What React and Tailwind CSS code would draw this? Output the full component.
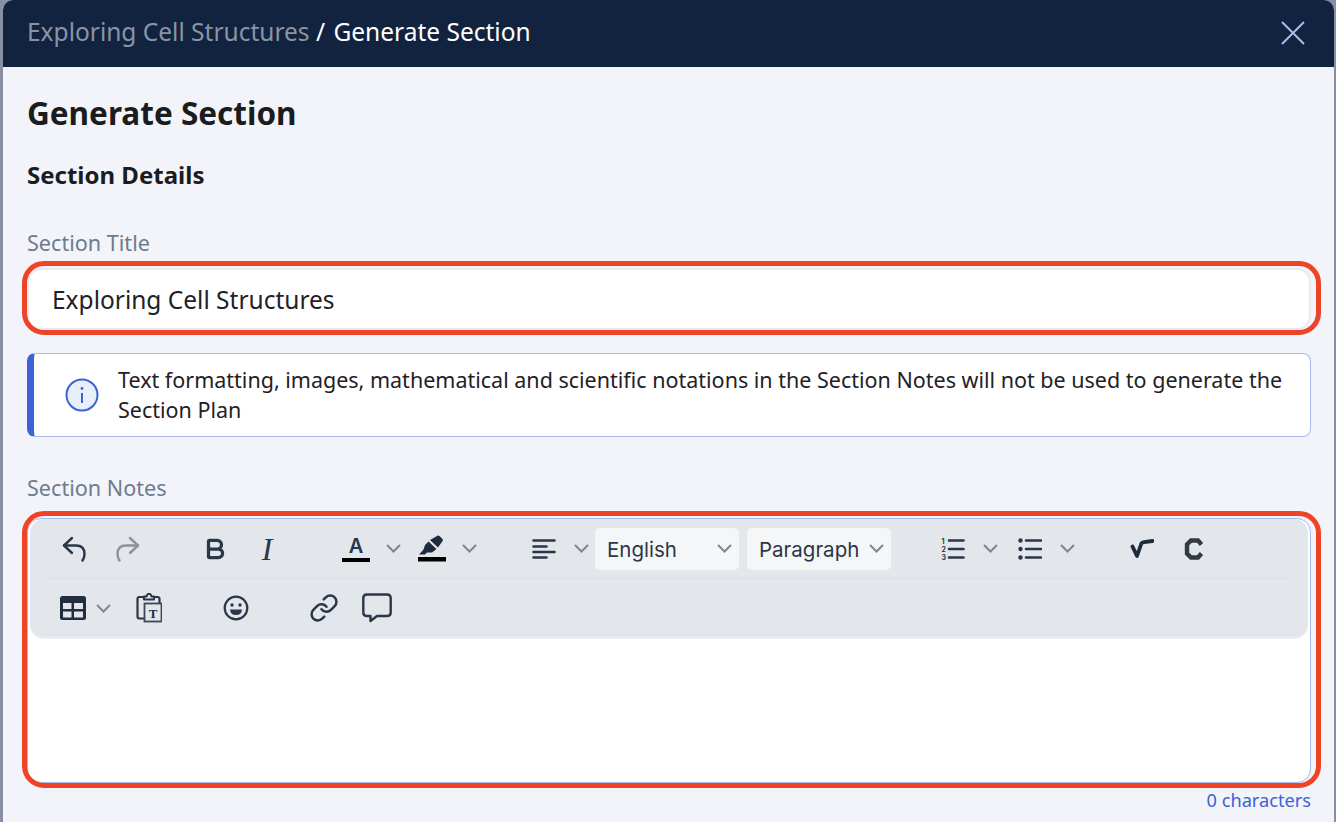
import { Bold, Link } from 'lucide-react'

function Chevron({ className = '' }) {
  return (
    <svg viewBox="0 0 15 9" className={`w-[15px] h-[9px] shrink-0 ${className}`} fill="none" stroke="#80868f" strokeWidth="2">
      <path d="M1 1L7.5 7.5L14 1" />
    </svg>
  )
}

function FakeSelect({ label, className = '' }) {
  return (
    <div className={`w-[144px] h-[42px] shrink-0 rounded-[5px] bg-[#f5f6f7] flex items-center justify-between pl-[12px] pr-[7px] text-[20.5px] text-[#2d3748] ${className}`}>
      <span className="pt-[3px]">{label}</span>
      <Chevron />
    </div>
  )
}

function RedRing({ className = '' }) {
  return <div className={`absolute rounded-[22px] border-[5px] border-[#ee4327] pointer-events-none ${className}`} />
}

function Undo({ className = '', color = '#2b3648' }) {
  return (
    <svg viewBox="0 0 24 26" className={`w-[24px] h-[26px] shrink-0 ${className}`} fill="none" stroke={color} strokeWidth="2.4" strokeLinecap="round" strokeLinejoin="round">
      <path d="M10 2L2 9.5L10 17" />
      <path d="M2 9.5H14Q22.5 9.5 22.5 18Q22.5 21.5 20.5 24.5" />
    </svg>
  )
}

function Highlighter() {
  return (
    <svg viewBox="0 0 28 28" className="w-[28px] h-[28px]">
      <path d="M12 5L19.5 0.8Q20.5 0.2 21.5 1L24.5 4Q25.3 5 24.6 6L20 12.5Z" fill="#1f2a3c" />
      <path d="M10.5 6.5L18.5 14L14 17.5H9L7 19.5H1L5.5 14.5L7 10Z" fill="#1f2a3c" />
      <rect x="0" y="22" width="28" height="4.5" fill="#000" />
    </svg>
  )
}

function AlignLeft() {
  return (
    <svg viewBox="0 0 24 24" className="w-[24px] h-[24px]" stroke="#2b3648" strokeWidth="2.6" strokeLinecap="round">
      <path d="M1.5 3.5H22.5M1.5 9.5H14.5M1.5 15H22.5M1.5 20.5H14.5" />
    </svg>
  )
}

function Numbered() {
  return (
    <svg viewBox="0 0 24 24" className="w-[24px] h-[24px]">
      <path d="M8 3.5H22.5M8 12H22.5M8 20.5H22.5" stroke="#2b3648" strokeWidth="2.6" strokeLinecap="round" />
      <text x="0.5" y="6.5" fontSize="7" fontWeight="700" fontFamily="Inter" fill="#2b3648">1</text>
      <text x="0.5" y="14.5" fontSize="7" fontWeight="700" fontFamily="Inter" fill="#2b3648">2</text>
      <text x="0.5" y="23" fontSize="7" fontWeight="700" fontFamily="Inter" fill="#2b3648">3</text>
    </svg>
  )
}

function Bullets() {
  return (
    <svg viewBox="0 0 24 24" className="w-[24px] h-[24px]">
      <path d="M8 3.5H23M8 12H23M8 20.5H23" stroke="#2b3648" strokeWidth="2.6" strokeLinecap="round" />
      <circle cx="2.5" cy="3.5" r="2.2" fill="#2b3648" />
      <circle cx="2.5" cy="12" r="2.2" fill="#2b3648" />
      <circle cx="2.5" cy="20.5" r="2.2" fill="#2b3648" />
    </svg>
  )
}

function Sqrt() {
  return (
    <svg viewBox="0 0 24 24" className="w-[24px] h-[24px]" fill="none" stroke="#1f2a3c" strokeLinecap="round" strokeLinejoin="round">
      <path d="M2.5 9.5L7 19L11 7.5Q11.5 5.5 14 5.2L22.5 4" strokeWidth="3.8" />
    </svg>
  )
}

function ChemC() {
  return (
    <svg viewBox="0 0 20 24" className="w-[20px] h-[24px]" fill="none" stroke="#333a42" strokeWidth="4.4">
      <path d="M17.5 7.5L14 3.5H7L3 7.5V16.5L7 20.5H14L17.5 16.5" />
    </svg>
  )
}

function TableIcon() {
  return (
    <svg viewBox="0 0 26 26" className="w-[26px] h-[26px]">
      <rect x="0" y="1" width="26" height="24" rx="2.5" fill="#222d3f" />
      <rect x="3" y="8" width="8.5" height="6" fill="#e3e6eb" />
      <rect x="14" y="8" width="9" height="6" fill="#e3e6eb" />
      <rect x="3" y="16.5" width="8.5" height="6" fill="#e3e6eb" />
      <rect x="14" y="16.5" width="9" height="6" fill="#e3e6eb" />
    </svg>
  )
}

function ClipboardT() {
  return (
    <svg viewBox="0 0 26 30" className="w-[26px] h-[30px]">
      <path d="M8 4H3.5Q1.5 4 1.5 6V23.5Q1.5 25.5 3.5 25.5H8M18 4H21.5Q23.5 4 23.5 6V10" fill="none" stroke="#2b3648" strokeWidth="2.2" />
      <path d="M8 6.5V3.5H10.5Q11 0.8 13 0.8Q15 0.8 15.5 3.5H18V6.5Z" fill="none" stroke="#2b3648" strokeWidth="2" strokeLinejoin="round" />
      <rect x="8.5" y="10.5" width="17" height="18" fill="#e3e6eb" stroke="#3d4757" strokeWidth="1.8" />
      <text x="17" y="25" textAnchor="middle" fontSize="13" fontWeight="700" fontFamily="Liberation Serif" fill="#1f2a3c">T</text>
    </svg>
  )
}

function Laugh() {
  return (
    <svg viewBox="0 0 26 26" className="w-[26px] h-[26px] shrink-0" fill="none">
      <circle cx="13" cy="13" r="11.3" stroke="#2b3648" strokeWidth="2.2" />
      <circle cx="9" cy="10" r="1.7" fill="#2b3648" />
      <circle cx="17" cy="10" r="1.7" fill="#2b3648" />
      <path d="M7 14.5H19Q18.5 20 13 20Q7.5 20 7 14.5Z" fill="#2b3648" />
    </svg>
  )
}

function Comment() {
  return (
    <svg viewBox="0 0 30 30" className="w-[30px] h-[30px]" fill="none" stroke="#2b3648" strokeWidth="2.4" strokeLinejoin="round">
      <path d="M5 1.5H25Q28.7 1.5 28.7 5V19.5Q28.7 23 25 23H15L8.5 28V23H5Q1.3 23 1.3 19.5V5Q1.3 1.5 5 1.5Z" />
    </svg>
  )
}

export default function App() {
  return (
    <div className="h-screen overflow-hidden bg-[#868fa3] pl-[3px] pr-[2px] font-['Noto_Sans',sans-serif]">
      <div className="h-full rounded-t-[10px] overflow-hidden bg-[#f3f4f9]">
        {/* Header */}
        <header className="h-[67px] bg-[#12233f] flex items-center justify-between pb-[2px] pl-[24px] pr-[29px] text-[24.5px]">
          <div>
            <span className="text-[#8a94a6]">Exploring Cell Structures</span>
            <span className="text-white"> / <span className="ml-[2px]">Generate Section</span></span>
          </div>
          <svg viewBox="0 0 24 24" className="w-[24px] h-[24px]" fill="none" stroke="#a9bdec" strokeWidth="2">
            <path d="M1 1L23 23M23 1L1 23" />
          </svg>
        </header>

        <div className="pl-[24px] pr-[23px]">
          <h1 className="pt-[26px] text-[31.5px] leading-[40px] font-bold text-[#1a1c20]">Generate Section</h1>
          <h2 className="mt-[27px] text-[24px] leading-[30px] font-bold text-[#1a1c20]">Section Details</h2>

          <label className="block mt-[39px] text-[21.6px] leading-[28px] text-[#6e7b8e]">Section Title</label>
          <div className="relative mt-[11px] h-[62px] rounded-[14px] bg-white border-2 border-[#e9eaf0] pl-[23px] pt-[3px] flex items-center text-[24.5px] text-[#1f2126]">
            Exploring Cell Structures
            <RedRing className="-left-[7px] -right-[12px] -top-[9px] -bottom-[7px]" />
          </div>

          {/* Info banner */}
          <div className="mt-[23px] h-[84px] rounded-[8px] bg-white border border-[#a9b9ea] border-l-[7px] border-l-[#3b62d6] flex items-center">
            <svg viewBox="0 0 34 34" className="w-[34px] h-[34px] ml-[31px] shrink-0" fill="none">
              <circle cx="17" cy="17" r="15.5" fill="#e9eefb" stroke="#3b62d6" strokeWidth="2" />
              <path d="M17 15V25" stroke="#3b62d6" strokeWidth="2" />
              <circle cx="17" cy="10.5" r="1.4" fill="#3b62d6" />
            </svg>
            <p className="ml-[19px] text-[21.5px] leading-[30px] text-[#1f2126] whitespace-nowrap">
              Text formatting, images, mathematical and scientific notations in the Section Notes will not be used to generate the<br />Section Plan
            </p>
          </div>

          <label className="block mt-[37px] text-[21.6px] leading-[28px] text-[#6e7b8e]">Section Notes</label>

          {/* Editor */}
          <div className="relative mt-[16px] h-[265px] rounded-[14px] bg-white border border-[#a9b9ea] font-['Inter',sans-serif]">
            <div className="mx-[2px] h-[120px] rounded-[14px] bg-[#e3e6eb] border-b-2 border-[#eceef1]">
              <div className="h-[60px] mx-[16px] border-b border-[#dddfe3] flex items-center">
                <Undo className="ml-[16px]" />
                <Undo className="ml-[30px] -scale-x-100" color="#8d939c" />
                <Bold className="w-[26px] h-[26px] ml-[62px] shrink-0 text-[#2b3648]" strokeWidth={3} />
                <span className="w-[24px] ml-[27px] shrink-0 text-center font-['Liberation_Serif',serif] italic text-[32px] leading-[32px] text-[#2b3648]">I</span>
                <div className="w-[28px] ml-[63px] shrink-0 flex flex-col items-center">
                  <span className="text-[20px] leading-[20px] font-semibold text-[#2b3648]">A</span>
                  <span className="w-[28px] h-[4px] mt-[2px] bg-black" />
                </div>
                <Chevron className="ml-[16px]" />
                <div className="ml-[17px] shrink-0"><Highlighter /></div>
                <Chevron className="ml-[16px]" />
                <div className="ml-[55px] shrink-0"><AlignLeft /></div>
                <Chevron className="ml-[18px]" />
                <FakeSelect label="English" className="ml-[6px]" />
                <FakeSelect label="Paragraph" className="ml-[8px]" />
                <div className="ml-[50px] shrink-0"><Numbered /></div>
                <Chevron className="ml-[18px]" />
                <div className="ml-[20px] shrink-0"><Bullets /></div>
                <Chevron className="ml-[18px]" />
                <div className="ml-[55px] shrink-0"><Sqrt /></div>
                <div className="ml-[30px] shrink-0"><ChemC /></div>
              </div>
              <div className="h-[58px] pl-[30px] flex items-center">
                <TableIcon />
                <Chevron className="ml-[10px]" />
                <div className="ml-[25px] shrink-0"><ClipboardT /></div>
                <div className="ml-[61px] shrink-0"><Laugh /></div>
                <Link className="w-[30px] h-[30px] ml-[60px] shrink-0 text-[#2b3648]" strokeWidth={2} />
                <div className="ml-[23px] shrink-0"><Comment /></div>
              </div>
            </div>
            <RedRing className="-left-[6px] -right-[11px] -top-[8px] -bottom-[6px]" />
          </div>

          <div className="mt-[5px] text-right text-[18.2px] leading-[24px] text-[#3b62d6]">0 characters</div>
        </div>
      </div>
    </div>
  )
}
